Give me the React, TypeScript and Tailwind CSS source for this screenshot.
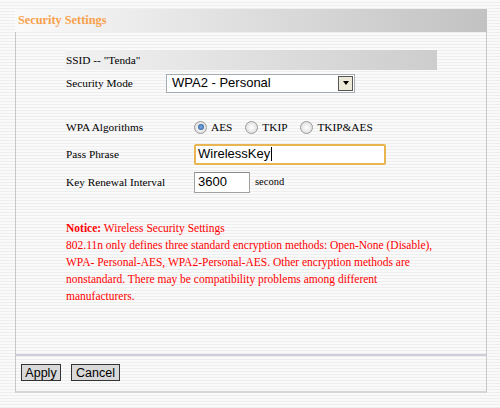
import React from 'react'

const serif = "font-['Liberation_Serif','Times_New_Roman',serif]"
const sans = "font-['Liberation_Sans',Arial,sans-serif]"

function Radio({ checked, label }: { checked?: boolean; label: string }) {
  return (
    <label className="flex items-center gap-[4px]">
      <span className="flex h-[13px] w-[13px] items-center justify-center rounded-full border border-[#9a9a9a] bg-radial from-[#ffffff] to-[#d6d6d6]">
        {checked && <span className="h-[6px] w-[6px] rounded-full bg-radial from-[#7fb2e6] to-[#1c4f8f]" />}
      </span>
      <span>{label}</span>
    </label>
  )
}

export default function App() {
  return (
    <div
      className={`h-[408px] w-[500px] overflow-hidden bg-[repeating-linear-gradient(180deg,#fafafa_0px,#fafafa_2px,#eeeeee_2px,#eeeeee_3px)] pl-[15px] pt-[9px] text-[11.3px] text-black ${serif}`}
    >
      <div className="w-[472px]">
        {/* title bar */}
        <div className="flex h-[23px] items-center bg-linear-to-r from-[#fafafa] to-[#c2c2c2] pl-[3px]">
          <span className="text-[12.3px] font-bold text-[#f8a04a]">Security Settings</span>
        </div>

        <div className="flex h-[361px] flex-col border-x border-b-2 border-x-[#c8c8c8] border-b-[#d6d6d6]">
          <div className="h-[322px] pl-[49px] pt-[18px]">
            <div className="flex h-[20px] w-[372px] items-center bg-linear-to-r from-[#f2f2f2] to-[#cdcdcd] pl-[1px]">
              SSID -- "Tenda"
            </div>

            <div className="mt-[2px] flex h-[22px] items-center pl-[1px]">
              <span className="w-[100px]">Security Mode</span>
              <div className={`flex h-[19px] w-[189px] items-center border border-[#a5acb2] bg-white ${sans} text-[13px]`}>
                <span className="flex-1 pl-[5px]">WPA2 - Personal</span>
                <span className="mr-[1px] flex h-[15px] w-[15px] items-center justify-center border border-[#555] bg-[#ece9d8]">
                  <span className="h-0 w-0 border-x-[3.5px] border-t-[4px] border-x-transparent border-t-black" />
                </span>
              </div>
            </div>

            <div className="mt-[22px] flex h-[22px] items-center pl-[1px]">
              <span className="w-[128px]">WPA Algorithms</span>
              <div className="flex items-center gap-[13px]">
                <Radio checked label="AES" />
                <Radio label="TKIP" />
                <Radio label="TKIP&AES" />
              </div>
            </div>

            <div className="mt-[5px] flex h-[22px] items-center pl-[1px]">
              <span className="w-[128px]">Pass Phrase</span>
              <div className={`flex h-[21px] w-[192px] items-center rounded-[2px] border-2 border-[#e9b552] bg-white pl-[2px] ${sans} text-[13px]`}>
                WirelessKey
                <span className="ml-[1px] h-[14px] w-[1px] bg-black" />
              </div>
            </div>

            <div className="mt-[6px] flex h-[22px] items-center pl-[1px]">
              <span className="w-[128px]">Key Renewal Interval</span>
              <div className={`flex h-[21px] w-[56px] items-center border border-[#a0a0a0] border-t-[#8a8a8a] bg-white pl-[3px] ${sans} text-[13px]`}>
                3600
              </div>
              <span className="ml-[5px] text-[10.5px]">second</span>
            </div>

            <div className="mt-[27px] whitespace-nowrap pl-[1px] text-[11.5px] leading-[17px] text-[#ff0000]">
              <span className="font-bold">Notice:</span> Wireless Security Settings
              <br />
              802.11n only defines three standard encryption methods: Open-None (Disable),
              <br />
              WPA- Personal-AES, WPA2-Personal-AES. Other encryption methods are
              <br />
              nonstandard. There may be compatibility problems among different
              <br />
              manufacturers.
            </div>
          </div>

          <div className={`flex h-[37px] gap-[10px] border-t-2 border-[#cfcfdc] pl-[5px] pt-[8px] ${sans} text-[12.5px]`}>
            <button className="h-[17px] w-[40px] border border-[#333] bg-[#d9d9d9] leading-[14px]">Apply</button>
            <button className="h-[17px] w-[49px] border border-[#333] bg-[#d9d9d9] leading-[14px]">Cancel</button>
          </div>
        </div>
      </div>
    </div>
  )
}
